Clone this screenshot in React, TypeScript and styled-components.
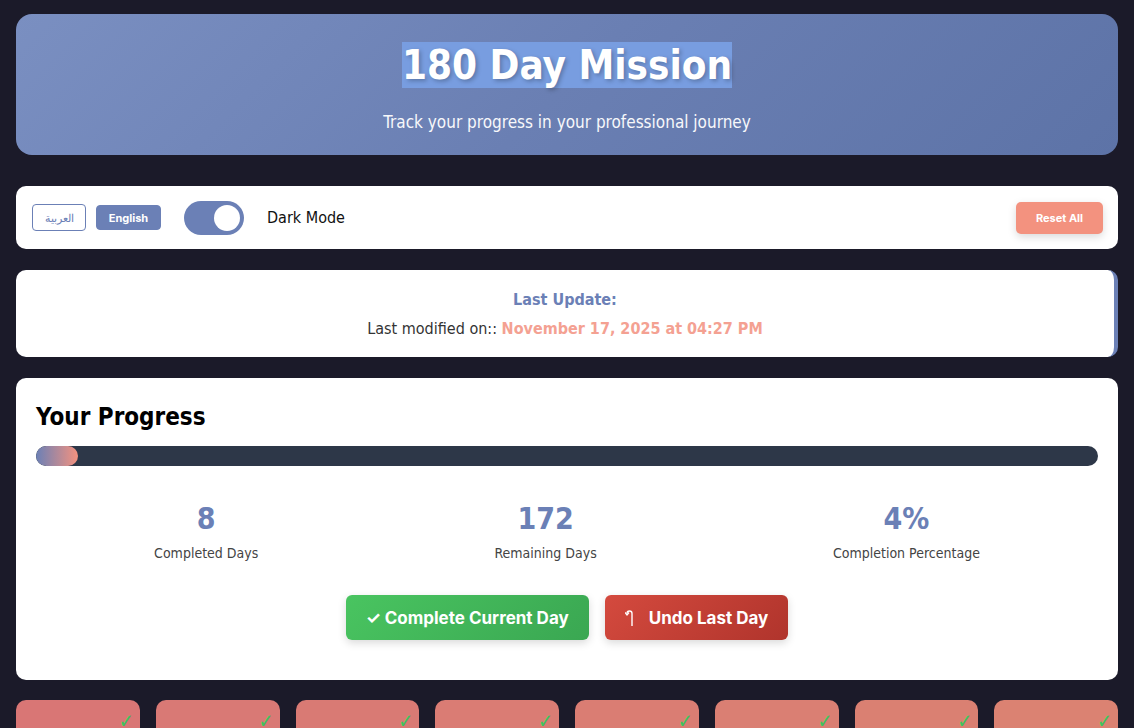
import styled, { createGlobalStyle } from "styled-components";

const GlobalStyle = createGlobalStyle`
  * { box-sizing: border-box; }
  body {
    margin: 0;
    background: #1b1a29;
    font-family: "DejaVu Sans Condensed", "DejaVu Sans", sans-serif;
    font-stretch: condensed;
    color: #222;
    overflow: hidden;
  }
`;

const TOTAL = 180;
const done = 8;
const pct = Math.round((done / TOTAL) * 100);

const dayCards = [
  "#d97675",
  "#d97975",
  "#d97a74",
  "#da7c74",
  "#da7d73",
  "#da7f73",
  "#da8072",
  "#db8272",
];

export default function App() {
  return (
    <>
      <GlobalStyle />
      <Page>
        <Header>
          <Title>
            <Selected>180 Day Mission</Selected>
          </Title>
          <Subtitle>Track your progress in your professional journey</Subtitle>
        </Header>

        <Controls>
          <LangGroup>
            <LangButton>العربية</LangButton>
            <LangButton $active>English</LangButton>
          </LangGroup>
          <Toggle>
            <Knob />
          </Toggle>
          <ModeLabel>Dark Mode</ModeLabel>
          <ResetButton>Reset All</ResetButton>
        </Controls>

        <UpdateCard>
          <UpdateTitle>Last Update:</UpdateTitle>
          <UpdateLine>
            Last modified on:: <DateText>November 17, 2025 at 04:27 PM</DateText>
          </UpdateLine>
        </UpdateCard>

        <ProgressCard>
          <SectionTitle>Your Progress</SectionTitle>
          <Track>
            <Fill style={{ width: `${pct}%` }} />
          </Track>
          <Stats>
            <Stat>
              <StatNumber>{done}</StatNumber>
              <StatLabel>Completed Days</StatLabel>
            </Stat>
            <Stat>
              <StatNumber>{TOTAL - done}</StatNumber>
              <StatLabel>Remaining Days</StatLabel>
            </Stat>
            <Stat>
              <StatNumber>{pct}%</StatNumber>
              <StatLabel>Completion Percentage</StatLabel>
            </Stat>
          </Stats>
          <Actions>
            <ActionButton $variant="complete">✓ Complete Current Day</ActionButton>
            <ActionButton $variant="undo">
              <UndoIcon viewBox="0 0 10 18" aria-hidden>
                <path d="M7 17V4.5a2.5 2.5 0 0 0-5 0" fill="none" stroke="currentColor" strokeWidth="1.4" />
                <path d="M0 3.5 2 6l2-2.5" fill="none" stroke="currentColor" strokeWidth="1.4" />
              </UndoIcon>
              Undo Last Day
            </ActionButton>
          </Actions>
        </ProgressCard>

        <DaysGrid>
          {dayCards.map((c, i) => (
            <DayCard key={i} $color={c}>
              <Check>✓</Check>
              <DayNumber>Day {i + 1}</DayNumber>
            </DayCard>
          ))}
        </DaysGrid>
      </Page>
    </>
  );
}

const Page = styled.div`
  padding: 14px 16px 40px;
  display: flex;
  flex-direction: column;
`;

const Header = styled.header`
  background: linear-gradient(135deg, #7a8fc1 0%, #6a7fb3 50%, #5d73a7 100%);
  border-radius: 16px;
  padding: 28px 20px 22px;
  text-align: center;
  color: #fff;
  margin-bottom: 31px;
`;

const Title = styled.h1`
  margin: 0 0 22px;
  font-size: 40px;
  line-height: 47px;
  font-weight: 700;
  text-shadow: 2px 2px 4px rgba(0, 0, 0, 0.25);
`;

const Selected = styled.span`
  background: #789de0;
`;

const Subtitle = styled.p`
  margin: 0;
  font-size: 17px;
  line-height: 22px;
  opacity: 0.95;
`;

const Controls = styled.div`
  background: #fff;
  border-radius: 10px;
  padding: 0 15px 0 16px;
  height: 63px;
  display: flex;
  align-items: center;
  margin-bottom: 21px;
`;

const LangGroup = styled.div`
  display: flex;
  gap: 10px;
  margin-right: 23px;
`;

const LangButton = styled.button<{ $active?: boolean }>`
  font-family: Inter, "Noto Sans", sans-serif;
  font-size: 11px;
  font-weight: ${(p) => (p.$active ? 700 : 500)};
  height: ${(p) => (p.$active ? "25px" : "27px")};
  width: ${(p) => (p.$active ? "65px" : "54px")};
  padding: 0;
  border-radius: 4px;
  border: 1px solid #6b80b6;
  background: ${(p) => (p.$active ? "#6b80b6" : "#fff")};
  color: ${(p) => (p.$active ? "#fff" : "#6b80b6")};
  align-self: center;
`;

const Toggle = styled.div`
  width: 60px;
  height: 34px;
  border-radius: 17px;
  background: #6b80b6;
  display: flex;
  align-items: center;
  justify-content: flex-end;
  padding: 0 4px;
  margin-right: 23px;
`;

const Knob = styled.div`
  width: 26px;
  height: 26px;
  border-radius: 50%;
  background: #fff;
`;

const ModeLabel = styled.span`
  font-size: 16px;
  color: #111;
`;

const ResetButton = styled.button`
  margin-left: auto;
  font-family: Inter, "Noto Sans", sans-serif;
  font-size: 11px;
  font-weight: 700;
  color: #fff;
  background: #f3927f;
  border: none;
  border-radius: 5px;
  width: 87px;
  height: 32px;
  box-shadow: 0 3px 8px rgba(0, 0, 0, 0.15);
`;

const UpdateCard = styled.div`
  background: #fff;
  border-radius: 10px;
  border-right: 4px solid #6b80b6;
  height: 87px;
  display: flex;
  flex-direction: column;
  align-items: center;
  justify-content: center;
  gap: 10px;
  margin-bottom: 21px;
`;

const UpdateTitle = styled.div`
  font-size: 16px;
  font-weight: 700;
  color: #6b80b6;
`;

const UpdateLine = styled.div`
  font-size: 16px;
  color: #333;
`;

const DateText = styled.span`
  color: #f4a192;
  font-weight: 700;
`;

const ProgressCard = styled.section`
  background: #fff;
  border-radius: 10px;
  padding: 24px 20px 40px;
  margin-bottom: 20px;
`;

const SectionTitle = styled.h2`
  margin: 0 0 14px;
  font-size: 24px;
  line-height: 30px;
  font-weight: 700;
  color: #000;
`;

const Track = styled.div`
  height: 20px;
  border-radius: 10px;
  background: #2d3748;
  overflow: hidden;
`;

const Fill = styled.div`
  height: 100%;
  border-radius: 10px;
  background: linear-gradient(90deg, #6b80b6, #f4927f);
`;

const Stats = styled.div`
  display: flex;
  margin: 36px 0 34px;
`;

const Stat = styled.div`
  flex: 1 1 auto;
  text-align: center;
`;

const StatNumber = styled.div`
  font-size: 30px;
  line-height: 34px;
  font-weight: 700;
  color: #6b80b6;
  margin-bottom: 9px;
`;

const StatLabel = styled.div`
  font-size: 14px;
  color: #444;
`;

const Actions = styled.div`
  display: flex;
  justify-content: center;
  gap: 16px;
`;

const ActionButton = styled.button<{ $variant: "complete" | "undo" }>`
  display: flex;
  align-items: center;
  gap: 10px;
  height: 45px;
  padding: 0 20px;
  border: none;
  border-radius: 6px;
  font-family: Inter, "Noto Sans", sans-serif;
  font-size: 17px;
  font-weight: 700;
  color: #fff;
  background: ${(p) =>
    p.$variant === "complete"
      ? "linear-gradient(135deg, #49c460, #3aa752)"
      : "linear-gradient(135deg, #d44a3e, #b0342c)"};
  box-shadow: 0 3px 8px rgba(0, 0, 0, 0.15);
`;

const UndoIcon = styled.svg`
  width: 10px;
  height: 18px;
  margin-right: 4px;
`;

const DaysGrid = styled.div`
  display: grid;
  grid-template-columns: repeat(8, 1fr);
  gap: 16px;
`;

const DayCard = styled.div<{ $color: string }>`
  position: relative;
  height: 110px;
  border-radius: 10px;
  background: ${(p) => p.$color};
  display: flex;
  align-items: center;
  justify-content: center;
`;

const Check = styled.span`
  position: absolute;
  top: 9px;
  right: 6px;
  font-size: 20px;
  font-weight: 700;
  color: #3ec45c;
`;

const DayNumber = styled.span`
  color: #fff;
  font-weight: 700;
  font-size: 16px;
`;
